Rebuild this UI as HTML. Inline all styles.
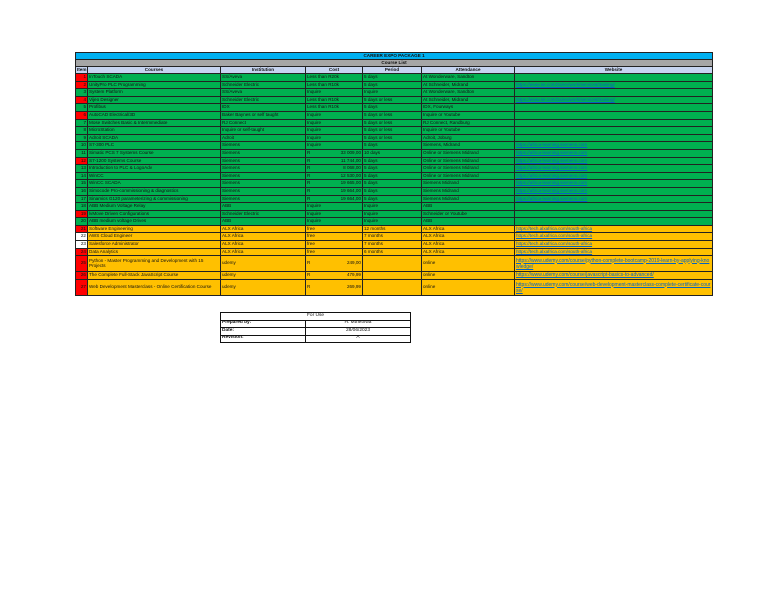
<!DOCTYPE html>
<html><head><meta charset="utf-8"><style>
body{margin:0;background:#fff;width:768px;height:594px;position:relative;font-family:"Liberation Sans",sans-serif;overflow:hidden}
table{border-collapse:collapse;position:absolute;table-layout:fixed}
td{border:0.8px solid #222;font-size:4.6px;line-height:1;padding:0 1px;white-space:nowrap;overflow:hidden;color:#111}
#t{left:75px;top:52px;width:637px}
#t tr{height:7.6px}
.g td{background:#00b050}
.y td{background:#ffc000}
td.r{background:#ff0000!important;text-align:right}
td.w{background:#fff!important;text-align:right}
td.n{text-align:right}
a{color:#0563c1;text-decoration:underline}
td.wr{white-space:normal;word-break:break-all;font-size:5px;line-height:1.25}
.h td{background:#c6d4f0;font-weight:bold;text-align:center}
#f{left:220px;top:312px;width:190px}
#f td{font-size:4.8px;height:6.5px;background:#fff;border:1px solid #111}
</style></head><body>
<table id="t">
<colgroup><col style="width:12px"><col style="width:133px"><col style="width:85px"><col style="width:57px"><col style="width:59px"><col style="width:93px"><col style="width:198px"></colgroup>
<tr style="height:7px"><td colspan="7" style="background:#00b0f0;font-weight:bold;text-align:center">CAREER EXPO PACKAGE 1</td></tr>
<tr style="height:7px"><td colspan="7" style="background:#a6a6a6;font-weight:bold;text-align:center">Course List</td></tr>
<tr class="h" style="height:7px"><td>Item</td><td>Courses</td><td>Institution</td><td>Cost</td><td>Period</td><td>Attendance</td><td>Website</td></tr>
<tr class="g"><td class="r">1</td><td>InTouch SCADA</td><td>SS/Aveva</td><td>Less than R20k</td><td>5 days</td><td>At Wonderware, Sandton</td><td></td></tr>
<tr class="g"><td class="r">2</td><td>UnityPro PLC Programming</td><td>Schneider Electric</td><td>Less than R10k</td><td>5 days</td><td>At Schneider, Midrand</td><td><a>https://www.se.com/za/en/work/services/training/</a></td></tr>
<tr class="g"><td class="n">3</td><td>System Platform</td><td>SS/Aveva</td><td>Inquire</td><td>Inquire</td><td>At Wonderware, Sandton</td><td></td></tr>
<tr class="g"><td class="r">4</td><td>Vijeo Designer</td><td>Schneider Electric</td><td>Less than R10k</td><td>5 days or less</td><td>At Schneider, Midrand</td><td><a>https://www.se.com/za/en/work/services/training/</a></td></tr>
<tr class="g"><td class="n">5</td><td>Profibus</td><td>IDX</td><td>Less than R10k</td><td>5 days</td><td>IDX, Fourways</td><td></td></tr>
<tr class="g"><td class="r">6</td><td>AutoCAD Electrical/3D</td><td>Baker Baynes or self taught</td><td>Inquire</td><td>5 days or less</td><td>Inquire or Youtube</td><td></td></tr>
<tr class="g"><td class="n">7</td><td>Mose Switches Basic &amp; Intermmediate</td><td>RJ Connect</td><td>Inquire</td><td>5 days or less</td><td>RJ Connect, Randburg</td><td></td></tr>
<tr class="g"><td class="n">8</td><td>MicroStation</td><td>Inquire or self-taught</td><td>Inquire</td><td>5 days or less</td><td>Inquire or Youtube</td><td></td></tr>
<tr class="g"><td class="n">9</td><td>Adroit SCADA</td><td>Adroit</td><td>Inquire</td><td>5 days or less</td><td>Adroit, Joburg</td><td></td></tr>
<tr class="g"><td class="n">10</td><td>S7-300 PLC</td><td>Siemens</td><td>Inquire</td><td>5 days</td><td>Siemens, Midrand</td><td><a>https://africa-learning.siemens.com</a></td></tr>
<tr class="g"><td class="n">11</td><td>Simatic PCS 7 Systems Course</td><td>Siemens</td><td>R<span style="float:right">33 009,00</span></td><td>10 days</td><td>Online or Siemens Midrand</td><td><a>https://africa-learning.siemens.com</a></td></tr>
<tr class="g"><td class="r">12</td><td>S7-1200 Systems Course</td><td>Siemens</td><td>R<span style="float:right">11 744,00</span></td><td>5 days</td><td>Online or Siemens Midrand</td><td><a>https://africa-learning.siemens.com</a></td></tr>
<tr class="g"><td class="n">13</td><td>Introduction to PLC &amp; LogoAdv</td><td>Siemens</td><td>R<span style="float:right">8 068,00</span></td><td>5 days</td><td>Online or Siemens Midrand</td><td><a>https://africa-learning.siemens.com</a></td></tr>
<tr class="g"><td class="n">14</td><td>WinCC</td><td>Siemens</td><td>R<span style="float:right">12 530,00</span></td><td>5 days</td><td>Online or Siemens Midrand</td><td><a>https://africa-learning.siemens.com</a></td></tr>
<tr class="g"><td class="n">15</td><td>WinCC SCADA</td><td>Siemens</td><td>R<span style="float:right">19 665,00</span></td><td>5 days</td><td>Siemens Midrand</td><td><a>https://africa-learning.siemens.com</a></td></tr>
<tr class="g"><td class="n">16</td><td>Simocode Pro-commissioning &amp; diagnostics</td><td>Siemens</td><td>R<span style="float:right">19 664,00</span></td><td>5 days</td><td>Siemens Midrand</td><td><a>https://africa-learning.siemens.com</a></td></tr>
<tr class="g"><td class="n">17</td><td>Sinamics G120 parameterizing &amp; commissioning</td><td>Siemens</td><td>R<span style="float:right">19 664,00</span></td><td>5 days</td><td>Siemens Midrand</td><td><a>https://africa-learning.siemens.com</a></td></tr>
<tr class="g"><td class="n">18</td><td>ABB Medium Voltage Relay</td><td>ABB</td><td>Inquire</td><td>Inquire</td><td>ABB</td><td></td></tr>
<tr class="g"><td class="r">19</td><td>lvMove Driven Configurations</td><td>Schneider Electric</td><td>Inquire</td><td>Inquire</td><td>Schneider or Youtube</td><td></td></tr>
<tr class="g"><td class="n">20</td><td>ABB medium voltage Drives</td><td>ABB</td><td>Inquire</td><td>Inquire</td><td>ABB</td><td></td></tr>
<tr class="y"><td class="r">21</td><td>Software Engineering</td><td>ALX Africa</td><td>free</td><td>12 months</td><td>ALX Africa</td><td><a>https://tech.alxafrica.com/south-africa</a></td></tr>
<tr class="y"><td class="w">22</td><td>AWS Cloud Engineer</td><td>ALX Africa</td><td>free</td><td>7 months</td><td>ALX Africa</td><td><a>https://tech.alxafrica.com/south-africa</a></td></tr>
<tr class="y"><td class="w">23</td><td>Salesforce Administrator</td><td>ALX Africa</td><td>free</td><td>7 months</td><td>ALX Africa</td><td><a>https://tech.alxafrica.com/south-africa</a></td></tr>
<tr class="y"><td class="r">24</td><td>Data Analytics</td><td>ALX Africa</td><td>free</td><td>6 months</td><td>ALX Africa</td><td><a>https://tech.alxafrica.com/south-africa</a></td></tr>
<tr class="y" style="height:16px"><td class="r">25</td><td style="white-space:normal">Python - Master Programming and Development with 15 Projects</td><td>udemy</td><td>R<span style="float:right">249,00</span></td><td></td><td>online</td><td class="wr"><a>https://www.udemy.com/course/python-complete-bootcamp-2019-learn-by-applying-knowledge/</a></td></tr>
<tr class="y" style="height:8px"><td class="r">26</td><td>The Complete Full-Stack JavaScript Course</td><td>udemy</td><td>R<span style="float:right">479,99</span></td><td></td><td>online</td><td style="font-size:5px"><a>https://www.udemy.com/course/javascript-basics-to-advanced/</a></td></tr>
<tr class="y" style="height:16px"><td class="r">27</td><td>Web Development Masterclass - Online Certification Course</td><td>udemy</td><td>R<span style="float:right">269,99</span></td><td></td><td>online</td><td class="wr"><a>https://www.udemy.com/course/web-development-masterclass-complete-certificate-course/</a></td></tr>
</table>
<table id="f">
<colgroup><col style="width:85px"><col style="width:105px"></colgroup>
<tr><td colspan="2" style="text-align:center">For Use</td></tr>
<tr><td style="font-weight:bold">Prepared by:</td><td style="text-align:center">H. Mthethwa</td></tr>
<tr><td style="font-weight:bold">Date:</td><td style="text-align:center">28/06/2023</td></tr>
<tr><td style="font-weight:bold">Revision:</td><td style="text-align:center">A</td></tr>
</table>
</body></html>
